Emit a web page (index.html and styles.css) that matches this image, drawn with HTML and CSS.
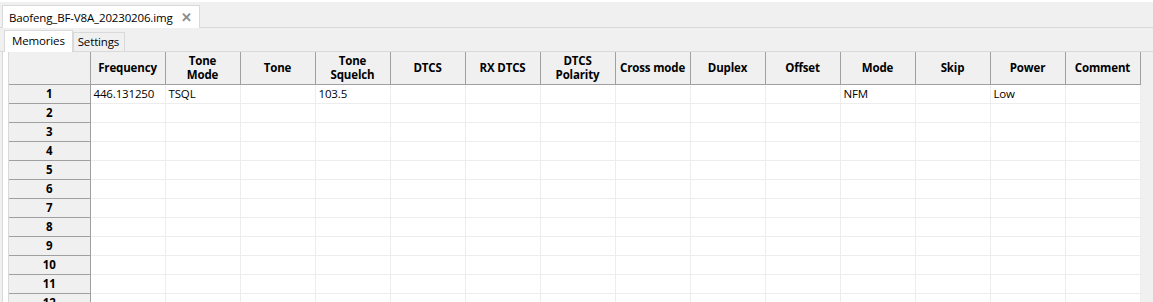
FILE: index.html
```html
<!DOCTYPE html>
<html lang="en">
<head>
  <meta charset="UTF-8" />
  <title>Baofeng_BF-V8A_20230206.img</title>
  <link rel="stylesheet" href="styles.css">
</head>
<body>

  <div class="doc-tabs">
    <div class="doc-tab">Baofeng_BF-V8A_20230206.img <span class="close">&#x2715;</span></div>
  </div>

  <div class="page-tabs">
    <div class="page-tab active">Memories</div>
    <div class="page-tab">Settings</div>
  </div>

  <div class="page">
    <div class="gutter"></div>
    <table class="grid">
      <colgroup>
        <col class="num-col">
        <col span="14" class="data-col">
      </colgroup>
      <thead>
        <tr>
          <th class="corner"></th>
          <th>Frequency</th>
          <th>Tone<br>Mode</th>
          <th>Tone</th>
          <th>Tone<br>Squelch</th>
          <th>DTCS</th>
          <th>RX DTCS</th>
          <th>DTCS<br>Polarity</th>
          <th>Cross mode</th>
          <th>Duplex</th>
          <th>Offset</th>
          <th>Mode</th>
          <th>Skip</th>
          <th>Power</th>
          <th>Comment</th>
        </tr>
      </thead>
      <tbody id="rows"></tbody>
    </table>
  </div>

  <script>
    // memory channels, only the first one is filled
    const memories = [
      ["446.131250", "TSQL", "", "103.5", "", "", "", "", "", "", "NFM", "", "Low", ""]
    ];

    const body = document.getElementById("rows");
    for (let i = 1; i <= 12; i++) {
      const tr = document.createElement("tr");
      const row = memories[i - 1] || [];
      let html = `<th class="num">${i}</th>`;
      for (let c = 0; c < 14; c++) {
        html += `<td>${row[c] || ""}</td>`;
      }
      tr.innerHTML = html;
      body.appendChild(tr);
    }
  </script>
</body>
</html>
```

FILE: styles.css
```css
body {
  margin: 0;
  background: #f0f0f0;
  font-family: "Open Sans", "Noto Sans", sans-serif;
  font-size: 11.5px;
  letter-spacing: -0.15px;
  color: #000;
  height: 302px;
  overflow: hidden;
  border-top: 2px solid #fff;
}

.doc-tabs {
  height: 25px;
  border-bottom: 1px solid #d9d9d9;
  display: flex;
  align-items: flex-end;
}
.doc-tab {
  margin-left: 2px;
  box-sizing: border-box;
  width: 198px;
  height: 23px;
  padding: 2px 0 0 6px;
  background: #fff;
  border: 1px solid #d9d9d9;
  border-bottom: none;
  margin-bottom: -1px;
  white-space: nowrap;
}
.close {
  color: #8c8c8c;
  font-size: 13px;
  font-weight: bold;
  margin-left: 6px;
}

.page-tabs {
  height: 23px;
  display: flex;
  align-items: flex-end;
  padding-left: 4px;
  border-bottom: 1px solid #d9d9d9;
}
.page-tab {
  height: 19px;
  box-sizing: border-box;
  padding: 1px 5px 0 4px;
  border: 1px solid #d9d9d9;
  border-bottom: none;
  background: #f0f0f0;
}
.page-tab.active {
  height: 22px;
  padding: 2px 7px 0 7px;
  background: #fff;
  margin-bottom: -1px;
}

.page {
  display: flex;
  align-items: flex-start;
  margin-left: 2px;
  border-left: 1px solid #d9d9d9;
}
.gutter {
  width: 5px;
  align-self: stretch;
  background: #fff;
  border-right: 1px solid #d9d9d9;
}

.grid {
  border-collapse: collapse;
  table-layout: fixed;
  background: #fff;
  width: 1131px;
}
.num-col { width: 81px; }
.data-col { width: 75px; }
.grid th, .grid td {
  height: 19px;
  padding: 0 3px;
  box-sizing: border-box;
  overflow: hidden;
  white-space: nowrap;
}
.grid thead th {
  height: 32px;
  background: #f0f0f0;
  font-weight: bold;
  line-height: 14px;
  text-align: center;
  border: 1px solid #a0a0a0;
  border-top: none;
}
.grid th.corner { border-left: none; }
.grid th.num {
  background: #f0f0f0;
  font-weight: bold;
  text-align: center;
  border: 1px solid #a0a0a0;
  border-left: none;
}
.grid td {
  border: 1px solid #ededed;
  line-height: 17px;
}
```
